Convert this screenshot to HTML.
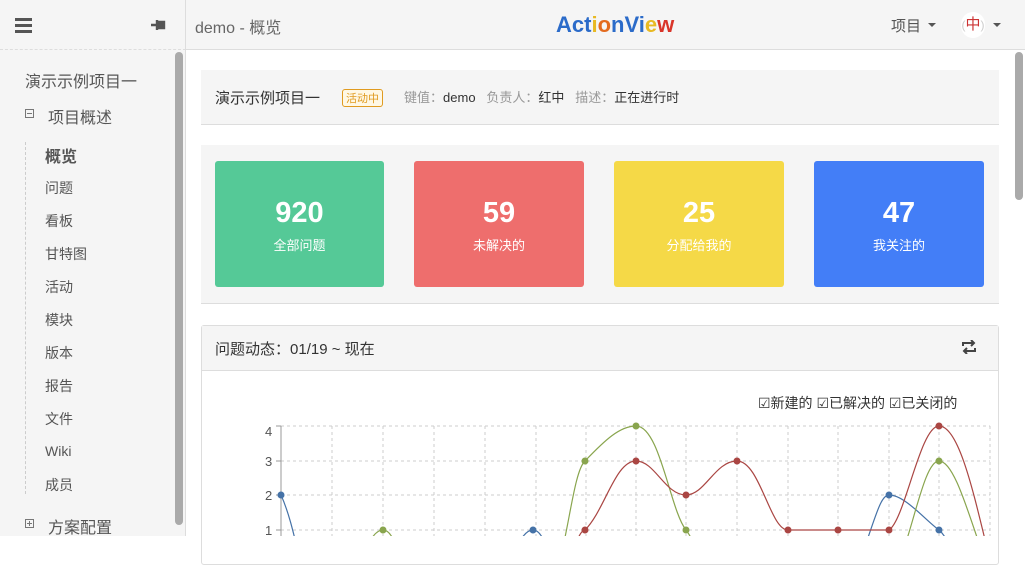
<!DOCTYPE html>
<html><head><meta charset="utf-8"><style>
*{box-sizing:border-box;margin:0;padding:0}
body{width:1025px;height:536px;overflow:hidden;background:#fff;font-family:"Liberation Sans","Noto Sans CJK SC",sans-serif;color:#333;position:relative}
.abs{position:absolute}
.c{font-family:"Noto Sans CJK SC",sans-serif}
.side{left:0;top:0;width:186px;height:536px;background:#f5f5f5;border-right:1px solid #ddd}
.hdr{left:186px;top:0;width:839px;height:50px;background:#f5f5f5;border-bottom:1px solid #ddd}
.nav{font-size:14px;color:#555}
.card{top:161px;height:126px;border-radius:3px;color:#fff;text-align:center}
.card b{display:block;font-size:29px;margin-top:36px;line-height:32px}
.card span{font-size:13px;display:block;margin-top:6px}
.tri{width:0;height:0;border-left:4px solid transparent;border-right:4px solid transparent;border-top:4px solid #555}
</style></head><body>
<div class="abs side"></div>
<div class="abs" style="left:0;top:49px;width:186px;border-top:1px dashed #ddd"></div>
<div class="abs" style="left:15px;top:18px;width:17px;height:3px;background:#555;box-shadow:0 6px 0 #555,0 12px 0 #555"></div>
<svg class="abs" style="left:150px;top:17px" width="18" height="16" viewBox="0 0 18 16"><path d="M1 8h6M7 3v10M7 5h7v6H7zM14 4v8" stroke="#555" stroke-width="2.4" fill="#555"/></svg>
<div class="abs" style="left:25px;top:68px;font-size:16px;color:#555">演示示例项目一</div>
<div class="abs" style="left:25px;top:109px;width:9px;height:9px;border:1px solid #777;font-size:0"><div style="margin:3px 1px;height:1px;background:#777"></div></div>
<div class="abs" style="left:48px;top:104px;font-size:16px;color:#555">项目概述</div>
<div class="abs" style="left:25px;top:142px;height:352px;border-left:1px dashed #ccc"></div>
<div class="abs" style="left:45px;top:143px;font-size:16px;font-weight:bold;color:#555">概览</div>
<div class="abs nav" style="left:45px;top:178px">问题</div>
<div class="abs nav" style="left:45px;top:211px">看板</div>
<div class="abs nav" style="left:45px;top:244px">甘特图</div>
<div class="abs nav" style="left:45px;top:277px">活动</div>
<div class="abs nav" style="left:45px;top:310px">模块</div>
<div class="abs nav" style="left:45px;top:343px">版本</div>
<div class="abs nav" style="left:45px;top:376px">报告</div>
<div class="abs nav" style="left:45px;top:409px">文件</div>
<div class="abs nav" style="left:45px;top:443px">Wiki</div>
<div class="abs nav" style="left:45px;top:475px">成员</div>
<div class="abs" style="left:25px;top:519px;width:9px;height:9px;border:1px solid #777;font-size:0"><div style="margin:3px 1px;height:1px;background:#777"></div><div style="position:absolute;left:3px;top:1px;width:1px;height:5px;background:#777"></div></div>
<div class="abs" style="left:48px;top:514px;font-size:16px;color:#555">方案配置</div>
<div class="abs" style="left:175px;top:52px;width:8px;height:473px;background:#aaa;border-radius:4px"></div>
<div class="abs hdr"></div>
<div class="abs" style="left:195px;top:14px;font-size:16px;color:#666">demo - 概览</div>
<div class="abs" style="left:556px;top:12px;font-size:22px;font-weight:bold"><span style="color:#2b6bc9">Act</span><span style="color:#e8b923">i</span><span style="color:#e36b1f">o</span><span style="color:#2b6bc9">nVi</span><span style="color:#e8b923">e</span><span style="color:#d9352a">w</span></div>
<div class="abs" style="left:891px;top:15px;font-size:15px;color:#555">项目</div>
<div class="abs tri" style="left:928px;top:23px"></div>
<div class="abs" style="left:961px;top:12px;width:24px;height:26px;border-radius:12px;background:#fff;color:#c33;font-size:15px;text-align:center;line-height:26px"><span style="color:#ccc;font-size:12px">(</span>中<span style="color:#ccc;font-size:12px">)</span></div>
<div class="abs tri" style="left:993px;top:23px"></div>
<div class="abs" style="left:1015px;top:52px;width:8px;height:148px;background:#aaa;border-radius:4px"></div>
<div class="abs" style="left:201px;top:70px;width:798px;height:55px;background:#f5f5f5;border-bottom:1px solid #ddd"></div>
<div class="abs" style="left:215px;top:87px;font-size:15px;color:#333">演示示例项目一</div>
<div class="abs" style="left:342px;top:89px;font-size:11px;color:#e09b20;border:1px solid #e09b20;border-radius:3px;padding:0 3px;background:#fff8e5">活动中</div>
<div class="abs" style="left:404px;top:87px;font-size:13px;color:#999">键值<span class="c">：</span><span style="color:#333">demo</span>&nbsp;&nbsp;&nbsp;负责人<span class="c">：</span><span style="color:#333">红中</span>&nbsp;&nbsp;&nbsp;描述<span class="c">：</span><span style="color:#333">正在进行时</span></div>
<div class="abs" style="left:201px;top:145px;width:798px;height:159px;background:#f5f5f5;border-bottom:1px solid #ddd"></div>
<div class="abs card" style="left:215px;width:169px;background:#55c997"><b>920</b><span>全部问题</span></div>
<div class="abs card" style="left:414px;width:170px;background:#ee6e6d"><b>59</b><span>未解决的</span></div>
<div class="abs card" style="left:614px;width:170px;background:#f5d947"><b>25</b><span>分配给我的</span></div>
<div class="abs card" style="left:814px;width:170px;background:#437ef7"><b>47</b><span>我关注的</span></div>
<div class="abs" style="left:201px;top:325px;width:798px;height:240px;border:1px solid #ddd;border-radius:3px"></div>
<div class="abs" style="left:202px;top:326px;width:796px;height:45px;background:#f5f5f5;border-bottom:1px solid #ddd"></div>
<div class="abs" style="left:215px;top:338px;font-size:15px;color:#333">问题动态<span class="c">：</span>01/19 ~ 现在</div>
<svg class="abs" style="left:960px;top:340px" width="18" height="14" viewBox="0 0 18 14"><path d="M3 6V3h11M11 0l3 3-3 3M15 8v3H4M7 8l-3 3 3 3" stroke="#444" stroke-width="2" fill="none"/></svg>
<div class="abs" style="left:758px;top:393px;font-size:14px;color:#333">☑新建的 ☑已解决的 ☑已关闭的</div>
<svg class="abs" style="left:0;top:0" width="1025" height="536">
<g stroke="#ccc" stroke-dasharray="3,3" fill="none">
<path d="M281 426H990M281 461H990M281 495H990M281 530H990"/>
<path d="M332 426V536M383 426V536M434 426V536M485 426V536M536 426V536M586 426V536M636 426V536M686 426V536M737 426V536M788 426V536M838 426V536M889 426V536M939 426V536M990 426V536"/>
</g>
<path d="M281 426V536M276 426h5M276 461h5M276 495h5M276 530h5" stroke="#999"/>
<g font-size="13" fill="#555" font-family="Liberation Sans"><text x="265" y="436">4</text><text x="265" y="466">3</text><text x="265" y="500">2</text><text x="265" y="535">1</text></g>
<g fill="none" stroke-width="1.2">
<path d="M281 495C290 515 295 540 300 560M510 560C520 540 525 530 533 530C540 530 545 540 550 560M860 560C875 520 880 495 889 495C905 495 925 520 939 530C945 535 950 545 955 560" stroke="#4572a7"/>
<path d="M360 560C370 540 375 530 383 530C390 530 395 540 400 560M560 560C570 520 575 470 585 461C605 440 620 426 636 426C660 426 670 510 686 530C690 535 695 545 700 560M900 560C915 520 925 461 939 461C955 461 970 520 985 560" stroke="#89a54e"/>
<path d="M570 560C575 545 580 530 585 530C605 510 615 461 636 461C655 461 665 495 686 495C705 495 715 461 737 461C760 461 770 530 788 530H889C905 520 920 426 939 426C960 426 975 500 990 560" stroke="#aa4643"/>
</g>
<g fill="#4572a7"><circle cx="281" cy="495" r="3.5"/><circle cx="533" cy="530" r="3.5"/><circle cx="889" cy="495" r="3.5"/><circle cx="939" cy="530" r="3.5"/></g>
<g fill="#89a54e"><circle cx="383" cy="530" r="3.5"/><circle cx="585" cy="461" r="3.5"/><circle cx="636" cy="426" r="3.5"/><circle cx="686" cy="530" r="3.5"/><circle cx="939" cy="461" r="3.5"/></g>
<g fill="#aa4643"><circle cx="585" cy="530" r="3.5"/><circle cx="636" cy="461" r="3.5"/><circle cx="686" cy="495" r="3.5"/><circle cx="737" cy="461" r="3.5"/><circle cx="788" cy="530" r="3.5"/><circle cx="838" cy="530" r="3.5"/><circle cx="889" cy="530" r="3.5"/><circle cx="939" cy="426" r="3.5"/></g>
</svg>
</body></html>
